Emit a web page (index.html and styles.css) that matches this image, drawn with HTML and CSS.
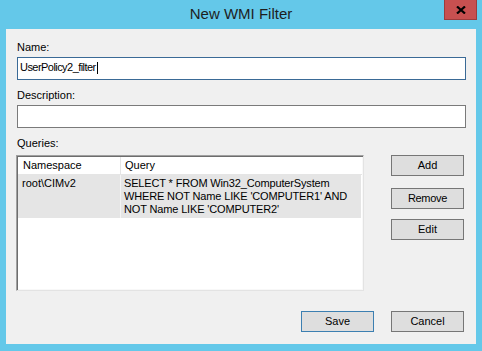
FILE: index.html
```html
<!DOCTYPE html>
<html lang="en">
<head>
  <meta charset="UTF-8">
  <title>New WMI Filter</title>
  <link rel="stylesheet" href="styles.css">
</head>
<body>
  <div class="window">
    <div class="titlebar">
      <span class="title">New WMI Filter</span>
      <button class="close-btn" aria-label="Close">
        <svg width="10" height="8" viewBox="0 0 10 8">
          <path d="M1 0.5 L9 7.5 M9 0.5 L1 7.5" stroke="#000" stroke-width="2.2" fill="none"/>
        </svg>
      </button>
    </div>

    <div class="client">
      <label class="field-label">Name:</label>
      <div class="textbox focused"><span class="value">UserPolicy2_filter</span><span class="caret"></span></div>

      <label class="field-label">Description:</label>
      <div class="textbox"></div>

      <label class="field-label">Queries:</label>
      <div class="queries">
        <div class="listview">
          <div class="lv-header">
            <div class="col ns">Namespace</div>
            <div class="col q">Query</div>
          </div>
          <div class="lv-row">
            <div class="col ns">root\CIMv2</div>
            <div class="col q">SELECT * FROM Win32_ComputerSystem<br>WHERE NOT Name LIKE 'COMPUTER1' AND<br>NOT Name LIKE 'COMPUTER2'</div>
          </div>
        </div>
        <div class="side-buttons">
          <button class="btn">Add</button>
          <button class="btn remove">Remove</button>
          <button class="btn edit">Edit</button>
        </div>
      </div>

      <div class="footer">
        <button class="btn default">Save</button>
        <button class="btn">Cancel</button>
      </div>
    </div>
  </div>
</body>
</html>
```

FILE: styles.css
```css
* { box-sizing: border-box; margin: 0; padding: 0; }
body {
  font-family: 'Liberation Sans', Arial, sans-serif;
  font-size: 11px;
  color: #000;
  background: #64c8e9;
  width: 482px;
  height: 351px;
  overflow: hidden;
}
.window {
  width: 482px;
  height: 351px;
  background: #64c8e9;
}
.titlebar {
  position: relative;
  height: 29px;
  text-align: center;
  padding-top: 1px;
}
.title {
  font-size: 15px;
  line-height: 26px;
  color: #1e1e1e;
}
.close-btn {
  position: absolute;
  top: 0;
  left: 444px;
  width: 33px;
  height: 20px;
  background: #c75050;
  border: 1px solid #9c3c3c;
  border-top: none;
  display: flex;
  align-items: center;
  justify-content: center;
}
.client {
  margin: 0 6px;
  height: 315px;
  background: #f0f0f0;
  padding: 12px 10px 0 11px;
}
.field-label {
  display: block;
  line-height: 13px;
  margin-bottom: 3px;
}
.textbox {
  height: 23px;
  background: #fff;
  border: 1px solid #7a7a7a;
  padding: 0 2px;
  line-height: 19px;
  margin-bottom: 9px;
  display: flex;
  align-items: flex-start;
}
.textbox.focused {
  border-color: #3a6a96;
}
.textbox .value {
  letter-spacing: -0.55px;
}
.caret {
  display: inline-block;
  width: 1px;
  height: 12px;
  margin-top: 4px;
  margin-left: 1px;
  background: #000;
}
.queries {
  display: flex;
  margin-top: 5px;
}
.listview {
  width: 348px;
  height: 136px;
  margin-left: -1px;
  background: #fff;
  border: 1px solid #a0a0a0;
  border-right-color: #e3e3e3;
  border-bottom-color: #e3e3e3;
  box-shadow: inset 1px 1px 0 #6d6d6d, inset -1px -1px 0 #f8f8f8;
  padding: 1px 1px 0 1px;
}
.lv-header {
  display: flex;
  height: 18px;
  line-height: 16px;
  background: #fff;
  border-bottom: 1px solid #e5e5e5;
}
.col.ns {
  width: 103px;
  padding-left: 5px;
  border-right: 1px solid #e5e5e5;
}
.col.q {
  flex: 1;
  padding-left: 4px;
}
.lv-row {
  display: flex;
  height: 43px;
  background: #e5e5e5;
  margin-right: 1px;
  line-height: 13px;
}
.lv-row .col {
  padding-top: 2px;
}
.lv-row .col.ns {
  padding-left: 4px;
  border-right-color: #f4f4f4;
}
.lv-row .col.q {
  padding-left: 3px;
  letter-spacing: -0.15px;
}
.side-buttons {
  margin-left: auto;
  margin-right: 2px;
  display: flex;
  flex-direction: column;
}
.btn {
  font-family: 'Liberation Sans', Arial, sans-serif;
  font-size: 11px;
  color: #000;
  width: 73px;
  height: 21px;
  line-height: 19px;
  background: #dedede;
  border: 1px solid #767676;
  text-align: center;
}
.btn.remove { margin-top: 12px; letter-spacing: -0.3px; }
.btn.edit { margin-top: 10px; }
.btn.default {
  border-color: #3c7fb1;
}
.footer {
  display: flex;
  justify-content: flex-end;
  gap: 17px;
  margin-top: 20px;
  margin-right: 2px;
}
```
